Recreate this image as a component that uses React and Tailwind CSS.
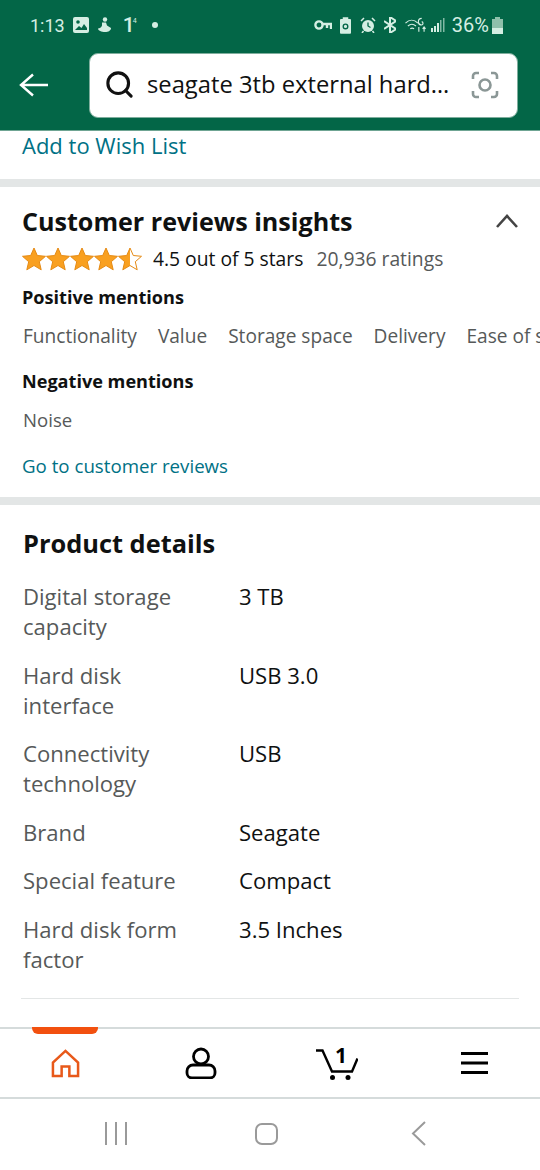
import { Search } from 'lucide-react';

const sans = 'font-["Open_Sans",sans-serif]';
const roboto = "font-['Roboto',sans-serif]";

const details = [
  { label: ['Digital storage', 'capacity'], value: '3 TB' },
  { label: ['Hard disk', 'interface'], value: 'USB 3.0' },
  { label: ['Connectivity', 'technology'], value: 'USB' },
  { label: ['Brand'], value: 'Seagate' },
  { label: ['Special feature'], value: 'Compact' },
  { label: ['Hard disk form', 'factor'], value: '3.5 Inches' },
];

const positive = ['Functionality', 'Value', 'Storage space', 'Delivery', 'Ease of setup'];

const Star = ({ half }) => (
  <svg viewBox="0 0 24 24" className="h-[24px] w-[24px] shrink-0">
    <defs>
      <linearGradient id="halfStar">
        <stop offset="50%" stopColor="#f9a020" />
        <stop offset="50%" stopColor="#ffffff" />
      </linearGradient>
    </defs>
    <path
      d="M12 1l3.300 7.500 8.200.8-6.200 5.400 1.900 8.100-7.200-4.300-7.200 4.300 1.900-8.100L.5 9.300l8.200-.8z"
      fill={half ? 'url(#halfStar)' : '#f9a020'}
      stroke="#e58a14"
      strokeWidth="1"
    />
  </svg>
);

const StatusBar = () => (
  <div className="flex h-[50px] items-center justify-between pl-[30px] pr-[37px] text-[#d5eee3]">
    <div className="flex items-center">
      <span className={`text-[18px] ${roboto}`}>1:13</span>
      <svg viewBox="0 0 16 16" className="ml-[8px] h-[16px] w-[16px]">
        <rect width="16" height="16" rx="2" fill="#d5eee3" />
        <circle cx="5" cy="5" r="1.800" fill="#036647" />
        <path d="M2 13l4-4 2.500 2 2.500-4 3 4v2H2z" fill="#036647" />
      </svg>
      <svg viewBox="0 0 16 16" className="ml-[8px] h-[16px] w-[16px]" fill="currentColor">
        <circle cx="8" cy="2.500" r="2.200" />
        <path d="M5 5.500h4l1 3 4 2.500c0 2.500-2.500 4-6 4s-7-1.500-7-3.500c1.500 0 3.500-1 4-3z" />
      </svg>
      <span className={`ml-[10px] w-[10px] text-[21px] font-medium leading-none ${roboto}`}>1</span>
      <span className={`-mt-[8px] text-[7px] leading-none ${roboto}`}>4</span>
      <span className="ml-[15px] h-[6px] w-[6px] rounded-full bg-[#d5eee3]" />
    </div>
    <div className="flex items-center">
      <svg viewBox="0 0 18 11" className="h-[11px] w-[18px]" fill="none" stroke="currentColor" strokeWidth="2.400">
        <circle cx="5" cy="5" r="3.600" />
        <path d="M8.500 4H17v5M13 4v4" />
      </svg>
      <svg viewBox="0 0 12 18" className="ml-[8px] h-[17px] w-[11px]" fill="currentColor">
        <path d="M3 0h6v2h2a1 1 0 011 1v14a1 1 0 01-1 1H1a1 1 0 01-1-1V3a1 1 0 011-1h2z" />
        <circle cx="6" cy="10" r="2.500" fill="none" stroke="#036647" strokeWidth="1.500" />
      </svg>
      <svg viewBox="0 0 16 16" className="ml-[9px] h-[16px] w-[16px]" fill="currentColor">
        <circle cx="8" cy="9" r="6" />
        <path d="M8 5.500V9l2.500 1.500" fill="none" stroke="#036647" strokeWidth="1.300" />
        <path d="M1 4l3-3M15 4l-3-3M3.500 14l-1.500 2M12.500 14l1.500 2" fill="none" stroke="currentColor" strokeWidth="1.500" />
      </svg>
      <svg viewBox="0 0 12 16" className="ml-[8px] h-[16px] w-[12px]" fill="none" stroke="currentColor" strokeWidth="2">
        <path d="M0 4l12 8-6 4V0l6 4-12 8" />
      </svg>
      <svg viewBox="0 0 22 16" className="ml-[9px] h-[16px] w-[21px]" fill="none" stroke="currentColor" strokeWidth="1.200">
        <path d="M0.500 6c4-4 9-4 13 0M3 9c3-2.500 5.500-2.500 8.500 0M5.500 12c1.500-1 2.500-1 4 0" />
        <path d="M17.500 1a1.800 1.800 0 100 7 1.800 1.800 0 000-3.500M14.500 10v5M20 10v5M18.500 12l1.500-2 1.500 2" />
      </svg>
      <svg viewBox="0 0 14 14" className="ml-[5px] h-[14px] w-[14px]" fill="currentColor">
        <rect x="0" y="10" width="2" height="4" />
        <rect x="3" y="8" width="2" height="6" />
        <rect x="6" y="5" width="2" height="9" />
        <rect x="9" y="2" width="1.500" height="12" opacity="0.6" />
        <rect x="12" y="0" width="1.500" height="14" opacity="0.6" />
      </svg>
      <span className={`ml-[7px] text-[20px] leading-none ${roboto}`}>36%</span>
      <svg viewBox="0 0 11 17" className="ml-[3px] h-[17px] w-[11px]">
        <path d="M3 0h5v2h3v15H0V2h3z" fill="#8fc0ab" />
        <rect y="11" width="11" height="6" fill="#d5eee3" />
      </svg>
    </div>
  </div>
);

const SearchBar = () => (
  <div className="flex h-[80px] items-start pl-[19px] pr-[22px] pt-[3px]">
    <svg viewBox="0 0 30 24" className="mt-[20px] h-[24px] w-[30px] shrink-0" fill="none" stroke="#fff" strokeWidth="2.400">
      <path d="M29 12H3M14 1.500L2 12l12 10.500" />
    </svg>
    <div className="ml-[40px] flex h-[65px] flex-1 items-center rounded-[9px] border border-[#7fae9d] bg-white pb-[2px] pl-[14px] pr-[18px]">
      <Search size={31} strokeWidth={2.4} className="shrink-0 text-[#111]" />
      <span className={`ml-[12px] flex-1 text-[23.75px] leading-none text-[#0f1111] ${sans}`}>
        seagate 3tb external hard…
      </span>
      <svg viewBox="0 0 28 28" className="h-[28px] w-[28px] shrink-0" fill="none" stroke="#8b9796" strokeWidth="2.600">
        <path d="M2 8V5a3 3 0 013-3h3M20 2h3a3 3 0 013 3v3M26 20v3a3 3 0 01-3 3h-3M8 26H5a3 3 0 01-3-3v-3" />
        <circle cx="14" cy="14" r="5.500" />
      </svg>
    </div>
  </div>
);

const Insights = () => (
  <section className="border-y-[8px] border-[#e3e6e6] pb-[17px] pl-[22px] pt-[14px]">
    <div className="flex items-center justify-between pr-[22px]">
      <h2 className={`text-[25.100px] font-bold leading-[40px] text-[#0f1111] ${sans}`}>Customer reviews insights</h2>
      <svg viewBox="0 0 22 14" className="h-[14px] w-[22px]" fill="none" stroke="#444" strokeWidth="2.600">
        <path d="M1 13L11 2l10 11" />
      </svg>
    </div>
    <div className="mt-[4px] flex h-[28px] items-center">
      <div className="flex">
        <Star />
        <Star />
        <Star />
        <Star />
        <Star half />
      </div>
      <span className={`ml-[11px] text-[19.300px] text-[#0f1111] ${sans}`}>4.5 out of 5 stars</span>
      <span className={`ml-[13px] text-[19.300px] text-[#565959] ${sans}`}>20,936 ratings</span>
    </div>
    <h3 className={`mt-[10px] text-[18.100px] font-bold leading-[28px] text-[#0f1111] ${sans}`}>Positive mentions</h3>
    <div className={`mt-[12px] flex gap-[21px] overflow-hidden whitespace-nowrap pl-[1px] text-[19.100px] leading-[26px] text-[#565959] ${sans}`}>
      {positive.map((item) => (
        <span key={item}>{item}</span>
      ))}
    </div>
    <h3 className={`mt-[18px] text-[18.100px] font-bold leading-[28px] text-[#0f1111] ${sans}`}>Negative mentions</h3>
    <div className={`mt-[11px] pl-[1px] text-[18.600px] leading-[28px] text-[#565959] ${sans}`}>Noise</div>
    <a className={`mt-[18px] block text-[18.700px] leading-[28px] text-[#007185] ${sans}`}>Go to customer reviews</a>
  </section>
);

const ProductDetails = () => (
  <section className="px-[21px] pt-[18px]">
    <h2 className={`pl-[2px] text-[25.400px] font-bold leading-[40px] text-[#0f1111] ${sans}`}>Product details</h2>
    <div className={`mt-[18px] flex flex-col gap-[18.500px] pl-[2px] text-[22.100px] leading-[30px] ${sans}`}>
      {details.map((row) => (
        <div key={row.value} className="flex">
          <div className="w-[216px] shrink-0 text-[#565959]">
            {row.label.map((line) => (
              <div key={line}>{line}</div>
            ))}
          </div>
          <div className="text-[#0f1111]">{row.value}</div>
        </div>
      ))}
    </div>
    <hr className="mt-[24px] border-[#e3e6e6]" />
  </section>
);

const BottomNav = () => (
  <div className="relative grid h-[72px] grid-cols-[130px_142px_130px_144px] items-center border-y-2 border-[#d5dbdb] bg-white">
    <div className="absolute -top-[2px] left-[32px] h-[7px] w-[66px] rounded-b-[6px] bg-[#f2500f]" />
    <svg viewBox="0 0 30 30" className="mx-auto h-[29px] w-[29px]" fill="none" stroke="#e8591a" strokeWidth="2.600">
      <path d="M2 28V14L15 2l13 12v14h-9v-10h-8v10z" />
    </svg>
    <svg viewBox="0 0 32 32" className="mx-auto h-[32px] w-[32px]" fill="none" stroke="#000" strokeWidth="2.800">
      <circle cx="16" cy="9.500" r="7.500" />
      <path d="M7 31h18a5 5 0 005-5v-2a6 6 0 00-6-6h-16a6 6 0 00-6 6v2a5 5 0 005 5z" />
    </svg>
    <div className="relative mx-auto h-[36px] w-[42px]">
      <svg viewBox="0 0 42 36" className="h-[36px] w-[42px]" fill="none" stroke="#000" strokeWidth="2.400">
        <path d="M0 5.500h6.500L16 26.500h20l5.500-13" />
        <circle cx="16.500" cy="32.500" r="2.500" fill="#000" stroke="none" />
        <circle cx="32" cy="32.500" r="2.500" fill="#000" stroke="none" />
      </svg>
      <span className={`absolute left-[19px] -top-[4px] text-[21px] font-bold leading-[28px] text-black ${sans}`}>1</span>
    </div>
    <svg viewBox="0 0 27 22" className="mx-auto h-[22px] w-[27px]" fill="#000">
      <rect width="27" height="3" />
      <rect y="9.500" width="27" height="3" />
      <rect y="19" width="27" height="3" />
    </svg>
  </div>
);

const SystemNav = () => (
  <div className="flex h-[71px] items-center bg-white pb-[2px]">
    <div className="ml-[105px] flex gap-[8px]">
      <span className="h-[23px] w-[2px] bg-[#9a9a9a]" />
      <span className="h-[23px] w-[2px] bg-[#9a9a9a]" />
      <span className="h-[23px] w-[2px] bg-[#9a9a9a]" />
    </div>
    <div className="ml-[128px] h-[22px] w-[23px] rounded-[7px] border-[2.5px] border-[#9a9a9a]" />
    <svg viewBox="0 0 15 25" className="ml-[133px] h-[25px] w-[15px]" fill="none" stroke="#9a9a9a" strokeWidth="2">
      <path d="M14 1L2 12.500 14 24" />
    </svg>
  </div>
);

export default function App() {
  return (
    <div className="flex h-[1170px] w-[540px] flex-col overflow-hidden bg-white">
      <header className="h-[131px] shrink-0 border-b border-[#6fa593] bg-[#036647]">
        <StatusBar />
        <SearchBar />
      </header>
      <main className="flex-1 overflow-hidden">
        <div className={`h-[48px] pl-[22px] text-[22px] leading-[28px] text-[#007185] ${sans}`}>Add to Wish List</div>
        <Insights />
        <ProductDetails />
      </main>
      <BottomNav />
      <SystemNav />
    </div>
  );
}
